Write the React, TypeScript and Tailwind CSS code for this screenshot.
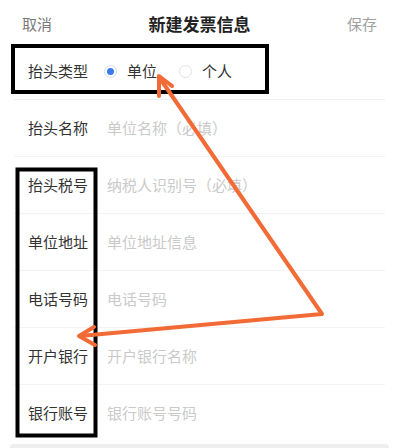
import { useState } from 'react';

// Invoice header form with annotation overlay (black boxes + orange arrows).

const rows = [
  { label: '抬头名称', placeholder: '单位名称（必填）' },
  { label: '抬头税号', placeholder: '纳税人识别号（必填）' },
  { label: '单位地址', placeholder: '单位地址信息' },
  { label: '电话号码', placeholder: '电话号码' },
  { label: '开户银行', placeholder: '开户银行名称' },
  { label: '银行账号', placeholder: '银行账号号码' },
];

const Radio = ({ checked, label, onClick }: { checked: boolean; label: string; onClick: () => void }) => (
  <button onClick={onClick} className="flex items-center gap-[10px]">
    <span
      className={`flex h-[13px] w-[13px] items-center justify-center rounded-full border ${
        checked ? 'border-[#cfdcf7] bg-white' : 'border-[#e2e2e2] bg-white'
      }`}
    >
      {checked && <span className="h-[7px] w-[7px] rounded-full bg-[#3b78f0]" />}
    </span>
    <span className="text-[15px] text-[#333]">{label}</span>
  </button>
);

export default function App() {
  const [kind, setKind] = useState<'company' | 'person'>('company');

  return (
    <div
      className="relative h-[448px] w-[399px] overflow-hidden bg-white"
      style={{ fontFamily: '"Noto Sans CJK SC", "Noto Sans", sans-serif' }}
    >
      <header className="flex h-[44px] items-center justify-between px-[22px] pt-[4px]">
        <span className="text-[15px] text-[#7a7a7a]">取消</span>
        <h1 className="text-[17px] font-bold text-[#222]">新建发票信息</h1>
        <span className="text-[15px] text-[#a0a0a0]">保存</span>
      </header>

      <div className="px-[14px]">
        <div className="flex h-[56px] items-center border-b border-[#f1f1f1] pl-[14px]">
          <span className="w-[76px] text-[15px] text-[#333]">抬头类型</span>
          <div className="flex items-center gap-[22px]">
            <Radio checked={kind === 'company'} label="单位" onClick={() => setKind('company')} />
            <Radio checked={kind === 'person'} label="个人" onClick={() => setKind('person')} />
          </div>
        </div>
        {rows.map(row => (
          <div key={row.label} className="flex h-[57px] items-center border-b border-[#f3f3f3] pl-[14px] last:border-b-0">
            <span className="w-[79px] shrink-0 text-[15px] text-[#333]">{row.label}</span>
            <input
              placeholder={row.placeholder}
              className="min-w-0 flex-1 bg-transparent text-[15px] text-[#333] outline-none placeholder:text-[#cacaca]"
            />
          </div>
        ))}
      </div>
      <div className="mx-[10px] mt-[2px] h-[6px] rounded-t bg-[#eeeeee]" />

      <svg className="pointer-events-none absolute inset-0" width="399" height="448" viewBox="0 0 399 448">
        <rect x="13" y="46" width="254" height="46" fill="none" stroke="#000" strokeWidth="4" />
        <rect x="17.5" y="169.5" width="78" height="266" fill="none" stroke="#000" strokeWidth="4" />
        <g stroke="#f26a35" strokeWidth="4" fill="none" strokeLinecap="round" strokeLinejoin="round">
          <polyline points="159,77 322,314 80,336" />
          <polyline points="172,86 159,76 159,96" />
          <polyline points="94,327 79,336 95,345" />
        </g>
      </svg>
    </div>
  );
}
